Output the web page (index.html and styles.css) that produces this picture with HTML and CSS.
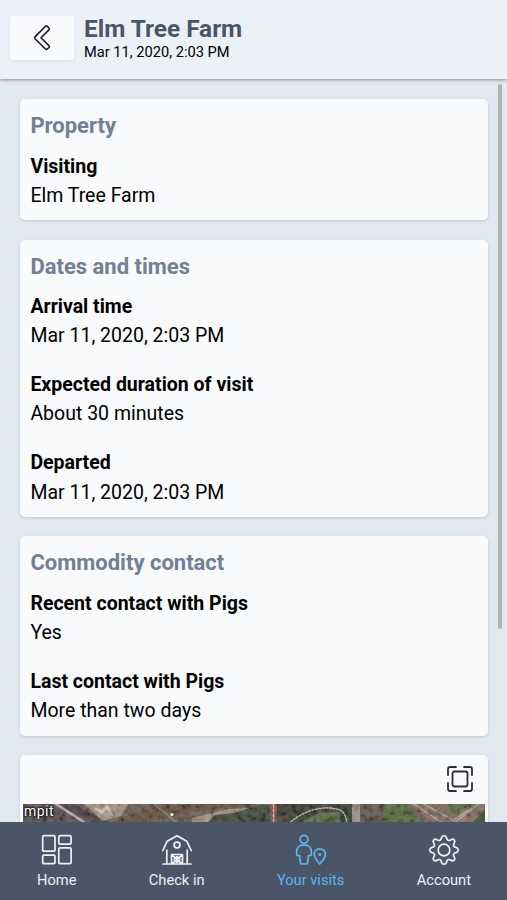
FILE: index.html
```html
<!DOCTYPE html>
<html lang="en">
    <head>
        <meta charset="utf-8">
        <meta name="viewport" content="width=device-width, initial-scale=1" />
        <title>Elm Tree Farm</title>
        <link rel="stylesheet" href="styles.css">
    </head>
    <body>
        <header class="header">
            <button class="btn-back" aria-label="Back">
                <svg width="20" height="28" viewBox="0 0 20 28"><path d="M13.500 2.300 3 12.900Q2.200 13.800 3 14.700L13.500 25q1 .8 1.900 0l1.500-1.500q.9-1 0-1.900L9 13.800l7.900-7.900q.9-1 0-1.900l-1.500-1.600q-.9-.9-1.900-.1Z"/></svg>
            </button>
            <div class="header-text">
                <h1>Elm Tree Farm</h1>
                <div class="header-date">Mar 11, 2020, 2:03 PM</div>
            </div>
        </header>

        <main class="content">
            <section class="card">
                <h2>Property</h2>
                <dl>
                    <div><dt>Visiting</dt><dd>Elm Tree Farm</dd></div>
                </dl>
            </section>
            <section class="card">
                <h2>Dates and times</h2>
                <dl>
                    <div><dt>Arrival time</dt><dd>Mar 11, 2020, 2:03 PM</dd></div>
                    <div><dt>Expected duration of visit</dt><dd>About 30 minutes</dd></div>
                    <div><dt>Departed</dt><dd>Mar 11, 2020, 2:03 PM</dd></div>
                </dl>
            </section>
            <section class="card">
                <h2>Commodity contact</h2>
                <dl>
                    <div><dt>Recent contact with Pigs</dt><dd>Yes</dd></div>
                    <div><dt>Last contact with Pigs</dt><dd>More than two days</dd></div>
                </dl>
            </section>
            <section class="card card-map">
                <button class="btn-expand" aria-label="Full screen">
                    <svg width="26" height="26" viewBox="0 0 26 26">
                        <rect x="5.500" y="5.500" width="15" height="15" rx="2"/>
                        <path d="M1 9V3q0-2 2-2h6M17 1h6q2 0 2 2v6M25 17v6q0 2-2 2h-6M9 25H3q-2 0-2-2v-6"/>
                    </svg>
                </button>
                <div class="map">
                    <svg width="462" height="100" viewBox="0 0 462 100">
                        <defs>
                            <filter id="ground" x="0" y="0" width="100%" height="100%">
                                <feTurbulence type="fractalNoise" baseFrequency=".16" numOctaves="3" seed="6"/>
                                <feColorMatrix values="1.5 0 0 0 -.4  1.5 0 0 0 -.41  1.5 0 0 0 -.43  0 0 0 0 .2"/>
                            </filter>
                            <filter id="soft"><feGaussianBlur stdDeviation=".6"/></filter>
                        </defs>
                        <rect width="462" height="100" fill="#645850"/>
                        <g filter="url(#soft)">
                            <!-- railway and bare ground -->
                            <path d="M0 0h38l40 24H0Z" fill="#50484a"/>
                            <path d="M33 0 70 24" stroke="#b5aba8" stroke-width="2.500"/>
                            <path d="M44 0 83 22" stroke="#40363c" stroke-width="7"/>
                            <path d="M61 0h45l-8 12-18 5Z" fill="#a08f80"/>
                            <path d="m73 5 6 3 5-5 5 8" stroke="#d5c5b6" stroke-width="3" fill="none"/>
                            <path d="M82 22Q119 1 169 0h67q-73 6-132 24Z" fill="#5c4939"/>
                            <path d="m169 14 36-9 39-2-14 7-36 8h-25Z" fill="#a08e79"/>
                            <!-- trees and fields -->
                            <path d="m185 18 7-7 19-2 25-8h11v23h-62Z" fill="#34402e"/>
                            <path d="M254 0h76v24h-76Z" fill="#37372f"/>
                            <path d="m272 22 23-13 28-2 10 17h-61Z" fill="#50653c"/>
                            <path d="M315 5h15v16h-12Z" fill="#2c352c"/>
                            <path d="M329 0h8v24h-8Z" fill="#968b82"/>
                            <path d="M337 0h25v24h-25Z" fill="#5c5046"/>
                            <path d="m360 0 26 1 17 23h-43Z" fill="#4f653a"/>
                            <path d="m386 0 31 24h45V0Z" fill="#7a675b"/>
                            <path d="m391 0 33 22M401 0l29 16 25-16M424 24l32-24" stroke="#ae998b" stroke-width="1.800" fill="none"/>
                            <path d="M424 0h25l-19 11Z" fill="#56633f"/>
                            <path d="m450 18 12-12v18h-14Z" fill="#354d25"/>
                        </g>
                        <rect width="462" height="100" filter="url(#ground)"/>
                        <path d="M250.500 0v24" stroke="#964d4b" stroke-width="4"/>
                        <path d="M250.500 0v24" stroke="#d7afaa" stroke-width="1.500" stroke-dasharray="3 2"/>
                        <path d="M265 20c17-15 35-18 49-15 7 2 9 6 10 15" stroke="#bcc3ae" stroke-width="1.300" stroke-dasharray="2 1.500" fill="none"/>
                        <path d="m131 0 27 22" stroke="#b4aaa4" stroke-width=".7"/>
                        <circle cx="149" cy="10.500" r="1.600" fill="#fff"/>
                    </svg>
                    <span class="map-label">mpit</span>
                </div>
            </section>
            <div class="scrollbar"></div>
        </main>

        <nav class="tabs">
            <a class="tab">
                <svg width="32" height="32" viewBox="0 0 32 32"><rect x="1.700" y="1.700" width="12.300" height="15.500" rx="1.200"/><rect x="17.800" y="1.700" width="12.300" height="8.400" rx="1.200"/><rect x="1.700" y="21.200" width="12.300" height="8.500" rx="1.200"/><rect x="17.800" y="13.900" width="12.300" height="15.800" rx="1.200"/></svg>
                <span>Home</span>
            </a>
            <a class="tab">
                <svg width="32" height="32" viewBox="0 0 32 32">
                    <path d="m1.800 16.500 4.400-9.300L16 1.800l9.800 5.400 4.400 9.300M2 30h28M5.800 16v14M26.200 16v14M10.500 30V20.500h11V30M11 21l10 9M21 21l-10 9"/>
                    <circle cx="16" cy="11" r="2.900"/>
                    <path d="m16 22.500 3 3-3 3-3-3Z"/>
                </svg>
                <span>Check in</span>
            </a>
            <a class="tab selected">
                <svg width="32" height="32" viewBox="0 0 32 32">
                    <circle cx="9" cy="5.300" r="4"/>
                    <path d="M9 10.800c-4.800 0-7.400 3.100-7.400 7.200v2.600q0 1 1 1h2l.8 7.200q.2 1.200 1.300 1.200h4.600q1.100 0 1.300-1.200l.8-7.200h2q1 0 1-1V18c0-4.100-2.600-7.200-7.400-7.200Z"/>
                    <path d="M24.800 30c-2.800-3.300-5.600-6.800-5.600-9.600a5.600 5.600 0 0 1 11.200 0c0 2.800-2.800 6.300-5.600 9.600Z"/>
                    <circle cx="24.800" cy="20.500" r=".7"/>
                </svg>
                <span>Your visits</span>
            </a>
            <a class="tab">
                <svg width="32" height="32" viewBox="0 0 32 32">
                    <path d="M13.600 3.400c.7-2.200 4.100-2.200 4.800 0l.4 1.400c.4 1.400 2 2.100 3.300 1.400l1.300-.7c2-1.100 4.200 1.100 3.100 3.100l-.7 1.300c-.7 1.300 0 2.900 1.400 3.300l1.400.4c2.200.7 2.200 4.100 0 4.800l-1.400.4c-1.400.4-2.100 2-1.400 3.300l.7 1.300c1.100 2-1.100 4.200-3.100 3.100l-1.300-.7c-1.300-.7-2.900 0-3.300 1.400l-.4 1.400c-.7 2.200-4.100 2.200-4.800 0l-.4-1.400c-.4-1.400-2-2.100-3.300-1.400l-1.300.7c-2 1.100-4.200-1.100-3.100-3.100l.7-1.300c.7-1.300 0-2.900-1.400-3.300l-1.400-.4c-2.200-.7-2.200-4.100 0-4.800l1.400-.4c1.400-.4 2.100-2 1.400-3.300l-.7-1.300c-1.100-2 1.100-4.200 3.100-3.100l1.300.7c1.300.7 2.900 0 3.300-1.400Z"/>
                    <circle cx="16" cy="16" r="5.800"/>
                </svg>
                <span>Account</span>
            </a>
        </nav>
    </body>
</html>
```
FILE: styles.css
```css
* {
    box-sizing: border-box;
}

body {
    margin: 0;
    height: 100vh;
    display: flex;
    flex-direction: column;
    overflow: hidden;
    background: #e2e8f0;
    color: #000;
    font-family: Roboto, "Liberation Sans", sans-serif;
    font-size: 19.5px;
    line-height: 29.3px;
}

h1, h2, dl, dd {
    margin: 0;
}

button {
    border: 0;
    padding: 0;
    background: none;
}

svg {
    display: block;
    fill: none;
    stroke-linejoin: round;
    stroke-linecap: round;
}

.header {
    flex: none;
    height: 79px;
    padding: 16px 10px;
    display: flex;
    gap: 10px;
    background: #ecf1f8;
    box-shadow: 0 1px 3px rgba(0, 0, 0, 0.4);
    z-index: 1;
}

.btn-back {
    width: 64px;
    height: 44px;
    display: flex;
    align-items: center;
    justify-content: center;
    background: #f8fafc;
    border-radius: 3px;
    box-shadow: 0 2px 4px rgba(0, 0, 0, 0.05);
}

.btn-back svg {
    stroke: #16191d;
    stroke-width: 1.6;
}

h1 {
    font-size: 24.4px;
    line-height: 26px;
    color: #4a5568;
}

.header-date {
    font-size: 14.65px;
    line-height: 20px;
}

.content {
    position: relative;
    flex: 1;
    min-height: 0;
    overflow: hidden;
    padding: 20px 19.5px 0 20.4px;
}

.card {
    background: #f8fafc;
    border-radius: 5px;
    padding: 10px;
    margin-bottom: 19.5px;
    box-shadow: 0 1px 3px rgba(0, 0, 0, 0.15);
}

h2 {
    font-size: 22px;
    line-height: 33px;
    margin-bottom: 9.5px;
    color: #718096;
}

dl {
    display: grid;
    gap: 19.5px;
}

dt {
    font-weight: bold;
}

.card-map {
    padding: 11px 2.5px 0;
}

.btn-expand {
    display: block;
    margin: 0 12px 12px auto;
}

.btn-expand svg {
    stroke: #2b2e31;
    stroke-width: 1.8;
}

.map {
    position: relative;
    height: 100px;
    overflow: hidden;
}

.map-label {
    position: absolute;
    left: 1px;
    top: 0;
    font-size: 14px;
    line-height: 14px;
    letter-spacing: 0.5px;
    color: #fff;
    text-shadow: 0 0 2px #000, 0 0 2px #000, 0 0 3px #000;
}

.scrollbar {
    position: absolute;
    right: 5px;
    top: 5px;
    width: 4px;
    height: 545px;
    border-radius: 2px;
    background: #aeb4bd;
}

.tabs {
    flex: none;
    height: 78px;
    padding: 12px 36px 0 37px;
    display: flex;
    justify-content: space-between;
    background: #4a5568;
    color: #edf2f7;
    font-size: 14.65px;
    line-height: 20px;
    z-index: 1;
}

.tab {
    display: flex;
    flex-direction: column;
    align-items: center;
    gap: 4px;
}

.tab svg {
    stroke: currentColor;
    stroke-width: 1.7;
}

.selected {
    color: #63b3ed;
}
```
